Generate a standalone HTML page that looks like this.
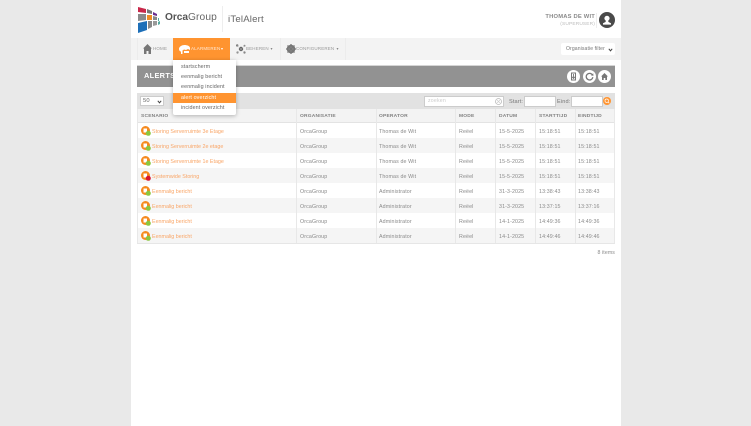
<!DOCTYPE html>
<html><head><meta charset="utf-8">
<style>
html,body{margin:0;padding:0;width:751px;height:426px;overflow:hidden;background:#e9e9e9;font-family:"Liberation Sans",sans-serif}
div,span{position:absolute;white-space:nowrap;box-sizing:border-box}
svg{position:absolute;overflow:visible}
.t{font-size:5.3px;color:#8a8a8a;letter-spacing:.12px;line-height:8px;margin-top:1px}
.h{font-size:4.9px;color:#808080;font-weight:bold;letter-spacing:.2px;line-height:8px;top:112px;margin-top:1px}
.r{left:137px;width:478px;height:15px}
.g{background:#f5f5f5}
.v{width:1px;background:#e8e8e8;top:109px;height:134px}
.l{font-size:5.35px;color:#f9a566;letter-spacing:0;line-height:8px;left:152px;margin-top:1px}
.n{font-size:4.5px;color:#999;letter-spacing:.15px;line-height:8px;top:45px}
.c{position:absolute;font-size:4px;line-height:8px;top:45px;color:#888}
.m{font-size:5.4px;color:#666;letter-spacing:.1px;line-height:8px;left:181px}
</style></head><body>
<div style="left:131px;top:0;width:490px;height:426px;background:#fff"></div>
<!-- logo -->
<svg style="left:138px;top:6px" width="24" height="27" viewBox="0 0 24 27">
<path d="M0 1 8 3 8 7 0 6Z" fill="#c8284a"/>
<path d="M9 3 14 5 14 8 9 7Z" fill="#777"/>
<path d="M15 6 19 8 19 10 15 9Z" fill="#6a2d8f"/>
<path d="M0 8 8 8 8 14 0 15Z" fill="#8a8a8a"/>
<path d="M9 9 14 9 14 14 9 14Z" fill="#ef8b22"/>
<path d="M15 10 19 11 19 14 15 14Z" fill="#888"/>
<path d="M20 12 21 12 21 15 20 15Z" fill="#55a9a0"/>
<path d="M0 17 9 15 9 24 0 27Z" fill="#1d6fb8"/>
<path d="M10 15 14 15 14 21 10 23Z" fill="#888"/>
<path d="M15 15 19 15 19 19 15 20Z" fill="#999"/>
<path d="M20 16 22 15 22 18 20 19Z" fill="#55a9a0"/>
</svg>
<div style="left:165px;top:11px;font-size:10.2px;line-height:14px;color:#555;font-weight:bold;letter-spacing:-.05px">Orca<span style="position:static;font-weight:normal;color:#666;letter-spacing:.1px">Group</span></div>
<div style="left:222px;top:6px;width:1px;height:26px;background:#eee"></div>
<div style="left:228px;top:13px;font-size:9.6px;line-height:13px;color:#666;letter-spacing:.2px">iTelAlert</div>
<!-- user -->
<div style="right:156px;top:13px;font-size:5.8px;line-height:8px;font-weight:bold;color:#8a8a8a;letter-spacing:.2px">THOMAS DE WIT</div>
<div style="right:156px;top:21px;font-size:4.8px;line-height:7px;color:#bbb;letter-spacing:.15px">(SUPERUSER)</div>
<div style="left:596px;top:13px;width:1px;height:15px;background:#eee"></div>
<svg style="left:599px;top:12px" width="16" height="16" viewBox="0 0 16 16"><circle cx="8" cy="8" r="8" fill="#4a4a4a"/><circle cx="8" cy="6.3" r="2.6" fill="#fff"/><path d="M7 8.500 9 8.500 9.500 10 12 11.200 12 12.600 4 12.600 4 11.200 6.500 10Z" fill="#fff"/></svg>
<!-- nav -->
<div style="left:131px;top:38px;width:490px;height:22px;background:#f3f3f3"></div>
<div style="left:137px;top:38px;width:1px;height:22px;background:#ececec"></div>
<div style="left:280px;top:38px;width:1px;height:22px;background:#ececec"></div>
<div style="left:345px;top:38px;width:1px;height:22px;background:#ececec"></div>
<svg style="left:143px;top:44px" width="9" height="10" viewBox="0 0 9 10"><path d="M4.500 0 9 4.500 8 4.500 8 10 5.500 10 5.500 7 3.500 7 3.500 10 1 10 1 4.500 0 4.500Z" fill="#777"/></svg>
<div class="n" style="left:153px">HOME</div>
<div style="left:173px;top:38px;width:57px;height:22px;background:#ff9430"></div>
<svg style="left:179px;top:45px" width="11" height="9" viewBox="0 0 11 9"><path d="M0 4C0 1.500 3 0 5.500 0 8 0 11 1 11 3L11 5 9 4 7 5 5 4.500 3.500 5.500 3.500 9 2 9 2 6.500C1 6.500 0 5.500 0 4Z" fill="#fff"/><path d="M5 6 10 6 10 8 5 8Z" fill="#fff"/></svg>
<div class="n" style="left:191px;color:#ffe9d5">ALARMEREN</div><span class="c" style="left:221px;color:#fff">▾</span>
<svg style="left:236px;top:44px" width="10" height="10" viewBox="0 0 10 10"><circle cx="5" cy="5" r="2.200" fill="#666"/><circle cx="1.200" cy="1.500" r="1.200" fill="#777"/><circle cx="8.500" cy="1.800" r="1" fill="#888"/><circle cx="1.500" cy="8.500" r="1.100" fill="#888"/><circle cx="8.500" cy="8.500" r="1.100" fill="#777"/><path d="M1.200 1.500 8.500 8.500M8.500 1.800 1.500 8.500" stroke="#bbb" stroke-width=".5"/></svg>
<div class="n" style="left:246px">BEHEREN</div><span class="c" style="left:270.500px">▾</span>
<svg style="left:286px;top:44px" width="10" height="10" viewBox="0 0 10 10"><circle cx="5" cy="5" r="3.300" fill="none" stroke="#777" stroke-width="2"/><path d="M5 0V10M0 5H10M1.500 1.500 8.500 8.500M8.500 1.500 1.500 8.500" stroke="#777" stroke-width="1.300"/></svg>
<div class="n" style="left:296px">CONFIGUREREN</div><span class="c" style="left:336.500px">▾</span>
<div style="left:561px;top:43px;width:54px;height:12px;background:#fff;border-radius:2px"></div>
<div style="left:566px;top:45px;font-size:5.1px;line-height:8px;color:#777;letter-spacing:.1px">Organisatie filter</div>
<svg style="left:608px;top:47.500px" width="5" height="4" viewBox="0 0 5 4"><path d="M.8 .8 2.500 2.800 4.200 .8" fill="none" stroke="#444" stroke-width="1"/></svg>
<!-- title bar -->
<div style="left:137px;top:65px;width:478px;height:22px;background:#929292;border-top:1px solid #d5d5d5"></div>
<div style="left:144px;top:71px;font-size:7.4px;line-height:10px;font-weight:bold;color:#fff;letter-spacing:.3px">ALERTS</div>
<svg style="left:567px;top:70px" width="13" height="13" viewBox="0 0 13 13"><circle cx="6.500" cy="6.500" r="6.500" fill="#fff"/><path d="M4.500 3H8.500V10H4.500Z" fill="none" stroke="#777" stroke-width="1"/><path d="M6.500 4V8M5 6.800 6.500 8.500 8 6.800" fill="none" stroke="#777" stroke-width=".9"/></svg>
<svg style="left:583px;top:70px" width="13" height="13" viewBox="0 0 13 13"><circle cx="6.500" cy="6.500" r="6.500" fill="#fff"/><path d="M9.500 5.200A3.300 3.300 0 1 0 9.800 7.200" fill="none" stroke="#777" stroke-width="1.300"/><path d="M8 5.500 10.500 5.800 10.200 3.200Z" fill="#777"/></svg>
<svg style="left:598px;top:70px" width="13" height="13" viewBox="0 0 13 13"><circle cx="6.500" cy="6.500" r="6.500" fill="#fff"/><path d="M6.500 3 10 6.500 9 6.500 9 10 7.300 10 7.300 8 5.700 8 5.700 10 4 10 4 6.500 3 6.500Z" fill="#777"/></svg>
<!-- toolbar -->
<div style="left:137px;top:93px;width:478px;height:16px;background:#e2e2e2"></div>
<div style="left:140px;top:96px;width:24px;height:10px;background:#fff;border:1px solid #ccc"></div>
<div style="left:143px;top:97px;font-size:5.8px;line-height:8px;color:#666;letter-spacing:.2px">50</div>
<svg style="left:157px;top:99.500px" width="5" height="4" viewBox="0 0 5 4"><path d="M.8 .8 2.500 2.800 4.200 .8" fill="none" stroke="#444" stroke-width="1"/></svg>
<div style="left:424px;top:96px;width:80px;height:11px;background:#fff;border:1px solid #ccc"></div>
<div style="left:428px;top:97px;font-size:5.2px;line-height:8px;color:#ccc;letter-spacing:.2px">zoeken</div>
<svg style="left:495px;top:98px" width="7" height="7" viewBox="0 0 7 7"><circle cx="3.500" cy="3.500" r="3" fill="none" stroke="#bbb" stroke-width=".8"/><path d="M2 2 5 5M5 2 2 5" stroke="#ccc" stroke-width=".7"/></svg>
<div class="t" style="left:509px;top:96.500px;color:#777;font-size:5.6px">Start:</div>
<div style="left:524px;top:96px;width:32px;height:11px;background:#fff;border:1px solid #ccc"></div>
<div class="t" style="left:557px;top:96.500px;color:#777;font-size:5.6px">Eind:</div>
<div style="left:571px;top:96px;width:32px;height:11px;background:#fff;border:1px solid #ccc"></div>
<svg style="left:603px;top:97px" width="8" height="8" viewBox="0 0 8 8"><circle cx="4" cy="4" r="4" fill="#ff9430"/><circle cx="3.700" cy="3.700" r="1.700" fill="none" stroke="#fff" stroke-width=".7"/><path d="M5 5 6.300 6.300" stroke="#fff" stroke-width=".7"/></svg>
<!-- table -->
<div style="left:137px;top:109px;width:478px;height:14px;background:#f3f3f3;border-bottom:1px solid #e3e3e3"></div>
<div class="r" style="top:123px;background:#fff"></div>
<div class="r g" style="top:138px"></div>
<div class="r" style="top:153px;background:#fff"></div>
<div class="r g" style="top:168px"></div>
<div class="r" style="top:183px;background:#fff"></div>
<div class="r g" style="top:198px"></div>
<div class="r" style="top:213px;background:#fff"></div>
<div class="r g" style="top:228px"></div>
<div style="left:137px;top:243px;width:478px;height:1px;background:#e6e6e6"></div>
<div class="v" style="left:137px"></div><div class="v" style="left:296px"></div><div class="v" style="left:376px"></div><div class="v" style="left:455px"></div><div class="v" style="left:495px"></div><div class="v" style="left:535px"></div><div class="v" style="left:575px"></div><div class="v" style="left:614px"></div>
<div class="h" style="left:141px">SCENARIO</div><div class="h" style="left:300px">ORGANISATIE</div><div class="h" style="left:379px">OPERATOR</div><div class="h" style="left:459px">MODE</div><div class="h" style="left:499px">DATUM</div><div class="h" style="left:539px">STARTTIJD</div><div class="h" style="left:578px">EINDTIJD</div>
<svg style="left:141px;top:126px" width="10" height="10" viewBox="0 0 10 10"><circle cx="4.500" cy="4.500" r="4.500" fill="#f58a1f"/><path d="M2.500 2.500H6V6.500H2.500Z" fill="#fff"/><circle cx="7.300" cy="7.300" r="2.500" fill="#8cc63f"/></svg>
<svg style="left:141px;top:141px" width="10" height="10" viewBox="0 0 10 10"><circle cx="4.500" cy="4.500" r="4.500" fill="#f58a1f"/><path d="M2.500 2.500H6V6.500H2.500Z" fill="#fff"/><circle cx="7.300" cy="7.300" r="2.500" fill="#8cc63f"/></svg>
<svg style="left:141px;top:156px" width="10" height="10" viewBox="0 0 10 10"><circle cx="4.500" cy="4.500" r="4.500" fill="#f58a1f"/><path d="M2.500 2.500H6V6.500H2.500Z" fill="#fff"/><circle cx="7.300" cy="7.300" r="2.500" fill="#8cc63f"/></svg>
<svg style="left:141px;top:171px" width="10" height="10" viewBox="0 0 10 10"><circle cx="4.500" cy="4.500" r="4.500" fill="#f58a1f"/><path d="M2.500 2.500H6V6.500H2.500Z" fill="#fff"/><circle cx="7.300" cy="7.300" r="2.500" fill="#d8142c"/></svg>
<svg style="left:141px;top:186px" width="10" height="10" viewBox="0 0 10 10"><circle cx="4.500" cy="4.500" r="4.500" fill="#f58a1f"/><path d="M2.500 2.500H6V6.500H2.500Z" fill="#fff"/><circle cx="7.300" cy="7.300" r="2.500" fill="#8cc63f"/></svg>
<svg style="left:141px;top:201px" width="10" height="10" viewBox="0 0 10 10"><circle cx="4.500" cy="4.500" r="4.500" fill="#f58a1f"/><path d="M2.500 2.500H6V6.500H2.500Z" fill="#fff"/><circle cx="7.300" cy="7.300" r="2.500" fill="#8cc63f"/></svg>
<svg style="left:141px;top:216px" width="10" height="10" viewBox="0 0 10 10"><circle cx="4.500" cy="4.500" r="4.500" fill="#f58a1f"/><path d="M2.500 2.500H6V6.500H2.500Z" fill="#fff"/><circle cx="7.300" cy="7.300" r="2.500" fill="#8cc63f"/></svg>
<svg style="left:141px;top:231px" width="10" height="10" viewBox="0 0 10 10"><circle cx="4.500" cy="4.500" r="4.500" fill="#f58a1f"/><path d="M2.500 2.500H6V6.500H2.500Z" fill="#fff"/><circle cx="7.300" cy="7.300" r="2.500" fill="#8cc63f"/></svg>

<div class="l" style="top:127px">Storing Serverruimte 3e Etage</div><div class="t" style="left:300px;top:127px">OrcaGroup</div><div class="t" style="left:379px;top:127px">Thomas de Wit</div><div class="t" style="left:459px;top:127px">Reëel</div><div class="t" style="left:499px;top:127px">15-5-2025</div><div class="t" style="left:539px;top:127px">15:18:51</div><div class="t" style="left:578px;top:127px">15:18:51</div>
<div class="l" style="top:142px">Storing Serverruimte 2e etage</div><div class="t" style="left:300px;top:142px">OrcaGroup</div><div class="t" style="left:379px;top:142px">Thomas de Wit</div><div class="t" style="left:459px;top:142px">Reëel</div><div class="t" style="left:499px;top:142px">15-5-2025</div><div class="t" style="left:539px;top:142px">15:18:51</div><div class="t" style="left:578px;top:142px">15:18:51</div>
<div class="l" style="top:157px">Storing Serverruimte 1e Etage</div><div class="t" style="left:300px;top:157px">OrcaGroup</div><div class="t" style="left:379px;top:157px">Thomas de Wit</div><div class="t" style="left:459px;top:157px">Reëel</div><div class="t" style="left:499px;top:157px">15-5-2025</div><div class="t" style="left:539px;top:157px">15:18:51</div><div class="t" style="left:578px;top:157px">15:18:51</div>
<div class="l" style="top:172px">Systemwide Storing</div><div class="t" style="left:300px;top:172px">OrcaGroup</div><div class="t" style="left:379px;top:172px">Thomas de Wit</div><div class="t" style="left:459px;top:172px">Reëel</div><div class="t" style="left:499px;top:172px">15-5-2025</div><div class="t" style="left:539px;top:172px">15:18:51</div><div class="t" style="left:578px;top:172px">15:18:51</div>
<div class="l" style="top:187px">Eenmalig bericht</div><div class="t" style="left:300px;top:187px">OrcaGroup</div><div class="t" style="left:379px;top:187px">Administrator</div><div class="t" style="left:459px;top:187px">Reëel</div><div class="t" style="left:499px;top:187px">31-3-2025</div><div class="t" style="left:539px;top:187px">13:38:43</div><div class="t" style="left:578px;top:187px">13:38:43</div>
<div class="l" style="top:202px">Eenmalig bericht</div><div class="t" style="left:300px;top:202px">OrcaGroup</div><div class="t" style="left:379px;top:202px">Administrator</div><div class="t" style="left:459px;top:202px">Reëel</div><div class="t" style="left:499px;top:202px">31-3-2025</div><div class="t" style="left:539px;top:202px">13:37:15</div><div class="t" style="left:578px;top:202px">13:37:16</div>
<div class="l" style="top:217px">Eenmalig bericht</div><div class="t" style="left:300px;top:217px">OrcaGroup</div><div class="t" style="left:379px;top:217px">Administrator</div><div class="t" style="left:459px;top:217px">Reëel</div><div class="t" style="left:499px;top:217px">14-1-2025</div><div class="t" style="left:539px;top:217px">14:49:36</div><div class="t" style="left:578px;top:217px">14:49:36</div>
<div class="l" style="top:232px">Eenmalig bericht</div><div class="t" style="left:300px;top:232px">OrcaGroup</div><div class="t" style="left:379px;top:232px">Administrator</div><div class="t" style="left:459px;top:232px">Reëel</div><div class="t" style="left:499px;top:232px">14-1-2025</div><div class="t" style="left:539px;top:232px">14:49:46</div><div class="t" style="left:578px;top:232px">14:49:46</div>
<div class="t" style="right:136px;top:248px;font-size:5.2px">8 items</div>
<!-- dropdown -->
<div style="left:173px;top:60px;width:63px;height:55px;background:#fff;box-shadow:0 1px 4px rgba(0,0,0,.28);border-radius:0 0 2px 2px"></div>
<div style="left:173px;top:93px;width:63px;height:10px;background:#ff9430"></div>
<div class="m" style="top:63px">startscherm</div>
<div class="m" style="top:73px">eenmalig bericht</div>
<div class="m" style="top:83px">eenmalig incident</div>
<div class="m" style="top:94px;color:#fff">alert overzicht</div>
<div class="m" style="top:104px">incident overzicht</div>
</body></html>
